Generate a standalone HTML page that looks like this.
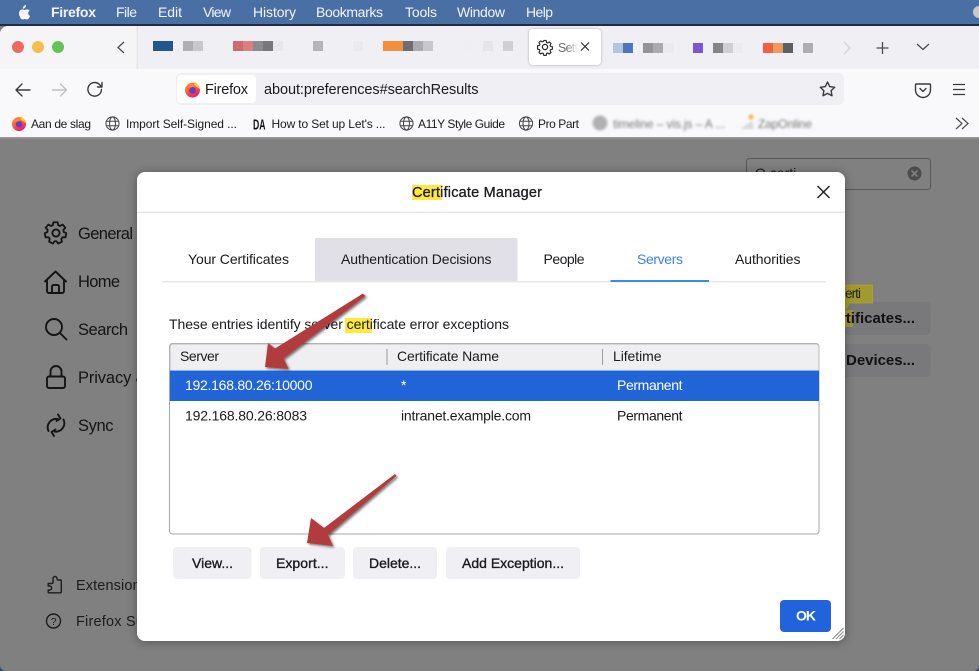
<!DOCTYPE html>
<html><head><meta charset="utf-8"><title>Certificate Manager</title>
<style>
html,body{margin:0;padding:0;width:979px;height:671px;overflow:hidden;background:#808080}
svg{display:block;font-family:"Liberation Sans",sans-serif}
text{white-space:pre}
.m{fill:#f2f5fa;font-size:14px}
.b{fill:#1b1b1f;font-size:12px}
.s{fill:#141416;font-size:16.500px}
.s2{fill:#1c1c1e;font-size:14.500px}
.d{fill:#1b1b1f;font-size:14px}
.bt{fill:#1b1b1f;font-size:14px;stroke:#1b1b1f;stroke-width:.35}
.ic{fill:none;stroke:#3a3a3e;stroke-width:1.4;stroke-linecap:round;stroke-linejoin:round}
.si{fill:none;stroke:#141416;stroke-width:1.9;stroke-linecap:round;stroke-linejoin:round}
</style></head><body>
<svg width="979" height="671" viewBox="0 0 979 671" xmlns="http://www.w3.org/2000/svg">
<defs>
<filter id="sh" x="-10%" y="-10%" width="120%" height="120%"><feDropShadow dx="0" dy="1" stdDeviation="5" flood-color="#000" flood-opacity=".35"/></filter>
<filter id="ash" x="-20%" y="-20%" width="140%" height="140%"><feDropShadow dx="1.5" dy="1.5" stdDeviation="1.2" flood-color="#000" flood-opacity=".55"/></filter>
<filter id="bl"><feGaussianBlur stdDeviation="1.3"/></filter>
<filter id="ts" x="-10%" y="-30%" width="120%" height="160%"><feDropShadow dx="0" dy="0" stdDeviation="1.2" flood-color="#000" flood-opacity=".3"/></filter>
<linearGradient id="ff" x1="0" y1="0" x2="0.6" y2="1"><stop offset="0" stop-color="#ff9a2e"/><stop offset=".5" stop-color="#ff5a3c"/><stop offset="1" stop-color="#e3226b"/></linearGradient>
<linearGradient id="fd" x1="0" y1="0" x2="1" y2="0"><stop offset="0" stop-color="#fff" stop-opacity="0"/><stop offset="1" stop-color="#fff"/></linearGradient>
<symbol id="fx" viewBox="0 0 16 16"><circle cx="8" cy="8.6" r="7" fill="url(#ff)"/><path d="M10 .5l2.500 2.500L15.500 8l-3-2-3-2z" fill="#ffc82e"/><circle cx="8" cy="8.8" r="3.200" fill="#6b3bc4"/><path d="M3 6c2-3 5-3 7-2l-3 2z" fill="#ff8a2e"/></symbol>
<symbol id="gl" viewBox="0 0 16 16"><g fill="none" stroke="#46464a" stroke-width="1.1"><circle cx="8" cy="8" r="7"/><ellipse cx="8" cy="8" rx="3.2" ry="7"/><path d="M1.4 5.6h13.2M1.4 10.4h13.2"/></g></symbol>
</defs>

<!-- menu bar -->
<rect width="979" height="26" fill="#4a6fa4"/>
<g transform="translate(4.800,1.200) scale(.85)"><path d="M23.9 7.5c.7-.9 1.100-1.900 1-3-1 .1-2 .6-2.700 1.400-.6.700-1.100 1.700-1 2.800 1.100 0 2-.5 2.700-1.200zM27.500 14.200c0-2 1.600-2.900 1.700-3-.9-1.400-2.400-1.600-2.900-1.600-1.200-.1-2.400.7-3 .7s-1.600-.7-2.600-.7c-1.300 0-2.600.8-3.300 2-1.400 2.400-.4 6 1 8 .7 1 1.500 2 2.500 2 1 0 1.400-.6 2.600-.6s1.600.6 2.600.6c1.100 0 1.800-1 2.500-2 .8-1.100 1.100-2.200 1.100-2.300 0 0-2.200-.8-2.200-3.100z" fill="#f4f6fa"/></g>
<text class="m" x="51" y="17" textLength="45" font-weight="700">Firefox</text>
<text class="m" x="116" y="17" textLength="21">File</text>
<text class="m" x="158" y="17" textLength="24">Edit</text>
<text class="m" x="203" y="17" textLength="28">View</text>
<text class="m" x="253" y="17" textLength="43">History</text>
<text class="m" x="316" y="17" textLength="67">Bookmarks</text>
<text class="m" x="405" y="17" textLength="32">Tools</text>
<text class="m" x="457" y="17" textLength="48">Window</text>
<text class="m" x="526" y="17" textLength="27">Help</text>
<circle cx="979" cy="12" r="6" fill="#c9c9c9"/>

<!-- window chrome -->
<rect x="0" y="24" width="979" height="2" fill="#1f2c44"/>
<path d="M0 34a8 8 0 0 1 8-8H979V70H0z" fill="#f0f0f4"/>
<path d="M0 34a8 8 0 0 1 8-8H137V69H0z" fill="#f5f4f6"/>
<rect x="136.500" y="26" width="1.500" height="43" fill="#e6e5e9"/>
<circle cx="18" cy="47" r="6" fill="#ee6a5f"/><circle cx="38" cy="47" r="6" fill="#f5bd4f"/><circle cx="58" cy="47" r="6" fill="#61c454"/>
<path d="M124 42l-6 5.500 6 5.500" fill="none" stroke="#4c4c50" stroke-width="1.300"/>

<!-- pixelated tabs -->
<g>
<rect x="153" y="41" width="20" height="10" fill="#23558f"/><rect x="183" y="41" width="10" height="10" fill="#b0b0b2"/><rect x="193" y="41" width="10" height="10" fill="#c8c8cc"/>
<rect x="233" y="41" width="10" height="10" fill="#d06a6d"/><rect x="243" y="41" width="10" height="10" fill="#d98080"/><rect x="253" y="41" width="10" height="10" fill="#8c8c90"/><rect x="263" y="41" width="10" height="10" fill="#78787c"/><rect x="273" y="41" width="10" height="10" fill="#e8e8ec"/>
<rect x="313" y="41" width="10" height="10" fill="#b4b4b6"/><rect x="353" y="41" width="10" height="10" fill="#ebebef"/>
<rect x="383" y="41" width="20" height="10" fill="#f28e3c"/><rect x="403" y="41" width="10" height="10" fill="#6e6e72"/><rect x="413" y="41" width="10" height="10" fill="#ababaf"/><rect x="423" y="41" width="10" height="10" fill="#c8c8cc"/>
<rect x="463" y="41" width="10" height="10" fill="#edeff1"/><rect x="483" y="41" width="10" height="10" fill="#e6e6ea"/><rect x="503" y="41" width="10" height="10" fill="#d0d0d4"/>
<rect x="613" y="43" width="10" height="10" fill="#b3c5e0"/><rect x="623" y="43" width="10" height="10" fill="#4a78c4"/><rect x="643" y="43" width="10" height="10" fill="#949496"/><rect x="653" y="43" width="10" height="10" fill="#ababad"/><rect x="663" y="43" width="10" height="10" fill="#eaeaee"/>
<rect x="693" y="43" width="10" height="10" fill="#7b55e0"/><rect x="713" y="43" width="10" height="10" fill="#858587"/><rect x="723" y="43" width="10" height="10" fill="#d0d0d4"/><rect x="733" y="43" width="10" height="10" fill="#ececf0"/>
<rect x="763" y="43" width="10" height="10" fill="#ee6040"/><rect x="773" y="43" width="10" height="10" fill="#f0985a"/><rect x="783" y="43" width="10" height="10" fill="#606062"/><rect x="803" y="43" width="10" height="10" fill="#aeaeb0"/>
</g>

<!-- selected tab -->
<rect x="529" y="29" width="72" height="36" rx="4" fill="#fff" filter="url(#ts)"/>
<g transform="translate(537,39)" fill="none" stroke="#2a2a2e" stroke-width="1.300" stroke-linejoin="round"><circle cx="8" cy="8" r="2.600"/><path d="M6.700 .8h2.600l.4 2.100 1.300.6 1.900-1.100 1.800 1.800-1.100 1.900.6 1.300 2.100.4v2.600l-2.100.4-.6 1.300 1.100 1.900-1.800 1.800-1.900-1.100-1.300.6-.4 2.100H6.700l-.4-2.100-1.300-.6-1.900 1.100-1.800-1.800 1.100-1.900-.6-1.300-2.100-.4V6.600l2.100-.4.6-1.300-1.100-1.900 1.800-1.800 1.900 1.100 1.300-.6z" transform="translate(.8 .8) scale(.9)"/></g>
<text x="558" y="52" font-size="12.500" fill="#6a6a6e" textLength="22">Setti</text>
<rect x="566" y="40" width="12" height="16" fill="url(#fd)"/>
<rect x="578" y="40" width="5" height="16" fill="#fff"/>
<path d="M581 42.500l8 8M589 42.500l-8 8" stroke="#2a2a2e" stroke-width="1.100"/>
<path d="M844 42l6 6-6 6" fill="none" stroke="#d4d4d8" stroke-width="1.300"/>
<path d="M882.500 42v12M876.500 48h12" stroke="#4c4c50" stroke-width="1.300"/>
<path d="M917 44l6 5.500 6-5.500" fill="none" stroke="#4c4c50" stroke-width="1.300"/>

<!-- toolbar -->
<rect x="0" y="69" width="979" height="68" fill="#f9f9fb"/>
<path class="ic" d="M30 90H16.500M22 84l-6 6 6 6"/>
<path class="ic" d="M52.500 90H66M60.500 84l6 6-6 6" style="stroke:#c0c0c4"/>
<path class="ic" d="M101.500 89.500a6.800 6.800 0 1 1-2-5l2.200 2.200M102 82.500v4.500h-4.500"/>
<rect x="176" y="73" width="668" height="32" rx="5" fill="#f0f0f4"/>
<rect x="177" y="75" width="79" height="28" rx="4" fill="#fff"/>
<use href="#fx" x="184" y="81" width="17" height="17"/>
<text x="205" y="94" font-size="14.500" fill="#1b1b1f" textLength="43">Firefox</text>
<text x="264" y="94" font-size="14.500" fill="#1b1b1f" textLength="214.500">about:preferences#searchResults</text>
<path class="ic" d="M827.500 82l2.200 4.600 5 .7-3.600 3.500.9 5-4.500-2.400-4.500 2.400.9-5-3.600-3.500 5-.7z"/>
<path class="ic" d="M916.500 84h13a1 1 0 0 1 1 1v5a7.500 7.500 0 0 1-15 0v-5a1 1 0 0 1 1-1zM920 88.500l3 3 3-3"/>
<path d="M953 84.500h12M953 89.500h12M953 94.500h12" stroke="#3a3a3e" stroke-width="1.300"/>

<!-- bookmarks -->
<use href="#fx" x="11" y="115" width="16" height="17"/>
<text class="b" x="31" y="128" textLength="60">Aan de slag</text>
<use href="#gl" x="105" y="116" width="15" height="15"/>
<text class="b" x="126" y="128" textLength="111">Import Self-Signed ...</text>
<text x="253" y="129.500" font-size="15" font-weight="700" fill="#111" textLength="12.500" lengthAdjust="spacingAndGlyphs">DA</text>
<text class="b" x="271.500" y="128" textLength="114">How to Set up Let's ...</text>
<use href="#gl" x="399" y="116" width="15" height="15"/>
<text class="b" x="418" y="128" textLength="87">A11Y Style Guide</text>
<use href="#gl" x="518.500" y="116" width="15" height="15"/>
<text class="b" x="538" y="128" textLength="41">Pro Part</text>
<g filter="url(#bl)"><circle cx="600" cy="123" r="7.500" fill="#b0b0b4"/><text class="b" x="613" y="128" textLength="112" style="fill:#777">timeline – vis.js – A ...</text><path d="M740 129l12-8 2 8z" fill="#d8d8d8"/><circle cx="751" cy="117" r="2.500" fill="#f0b050"/><text class="b" x="758" y="128" textLength="54" style="fill:#777">ZapOnline</text></g>
<path d="M956 118l6 5.500-6 5.500M962 118l6 5.500-6 5.500" fill="none" stroke="#4c4c50" stroke-width="1.200"/>
<rect x="0" y="137" width="979" height="1.500" fill="#9a9a9c"/>

<!-- dim page behind -->
<rect x="0" y="138.500" width="979" height="533" fill="#808080"/>
<rect x="746.500" y="158.500" width="184" height="31" rx="3" fill="none" stroke="#58585a" stroke-width="1"/>
<text x="755" y="178" font-size="14" fill="#1c1c1e">Q certi</text>
<circle cx="914.500" cy="173.500" r="7" fill="#4c4c4e"/><path d="M911.500 170.500l6 6M917.500 170.500l-6 6" stroke="#808080" stroke-width="1.600"/>
<rect x="800" y="302" width="130.500" height="33" rx="4" fill="#79797c"/>
<rect x="800" y="344" width="130.500" height="33" rx="4" fill="#79797c"/>
<rect x="830" y="285" width="42.500" height="18" fill="#a39a2e" stroke="#b0a42e" stroke-width=".7"/>
<path d="M845 303l5 0-3 6-2 0z" fill="#a39a2e"/>
<text x="845" y="298" font-size="13.500" fill="#222" textLength="16">erti</text>
<rect x="830" y="310" width="23" height="17" fill="#a39a2e"/>
<text x="915" y="323" font-size="15" font-weight="700" fill="#111" text-anchor="end">Certificates...</text>
<text x="846" y="365" font-size="15" font-weight="700" fill="#111" textLength="69">Devices...</text>

<!-- sidebar -->
<g transform="translate(44,221)"><circle cx="12" cy="12" r="3.600" class="si"/><path class="si" d="M9.800 1.500h4.400l.6 3 1.900.9 2.700-1.500 2.800 3.300-2 2.200.3 2.200 2.700 1.300-.8 4.300-3-.1-1.400 1.700.7 3-3.900 1.900-1.800-2.400h-2l-1.800 2.400-3.900-1.900.7-3-1.400-1.700-3 .1-.8-4.300 2.700-1.300.3-2.200-2-2.200 2.800-3.300 2.700 1.500 1.900-.9z" transform="scale(.96) translate(0,-.2)"/></g>
<path class="si" d="M45 281.500l10.500-10 10.500 10M47 279.500v11.500a2 2 0 0 0 2 2h13a2 2 0 0 0 2-2v-11.500M52 293v-6.500a1.500 1.500 0 0 1 1.500-1.500h4a1.500 1.500 0 0 1 1.500 1.500V293"/>
<circle class="si" cx="54" cy="327" r="8"/><path class="si" d="M60 333l6.500 6.500"/>
<rect class="si" x="47" y="376.500" width="18" height="11.500" rx="2"/><path class="si" d="M50.500 376v-4.500a5.500 5.500 0 0 1 11 0v4.500"/>
<path class="si" d="M48.500 431a8.500 8.500 0 0 1 9-12M63.500 419.500a8.500 8.500 0 0 1-9 12M58 414.500l2.500 4-4 2.500M54 436l-2.500-4 4-2.500"/>
<text class="s" x="78" y="239" textLength="55">General</text>
<text class="s" x="78" y="287" textLength="42">Home</text>
<text class="s" x="78" y="335" textLength="50">Search</text>
<text class="s" x="78" y="383" textLength="84">Privacy &amp; S</text>
<text class="s" x="78" y="431" textLength="35.500">Sync</text>
<path class="ic" style="stroke:#1c1c1e" d="M53 578.500a2 2 0 0 1 4 0c0 1 .2 1.500 1 1.500h2.500a.8.800 0 0 1 .8.800V592a.8.800 0 0 1-.8.800H49a.8.800 0 0 1-.8-.8v-2h1.500a2 2 0 0 0 0-4h-1.500v-2.500h4c.8 0 1-1 .8-3z"/>
<circle class="ic" style="stroke:#1c1c1e" cx="53.500" cy="621" r="7"/>
<text x="50.700" y="625" font-size="10.500" fill="#1c1c1e">?</text>
<text class="s2" x="76" y="590" textLength="72">Extensions</text>
<text class="s2" x="76" y="626" textLength="102">Firefox Support</text>

<!-- dialog -->
<rect x="137" y="172" width="708" height="469" rx="8" fill="#fff" filter="url(#sh)"/>
<rect x="137" y="211.500" width="708" height="1.500" fill="#e8e8ea"/>
<rect x="412" y="185" width="30" height="15" fill="#ffe93d"/>
<text x="412" y="197" font-size="14.500" fill="#1b1b1f" stroke="#1b1b1f" stroke-width=".3" textLength="130">Certificate Manager</text>
<path d="M817.500 186l12 12M829.500 186l-12 12" stroke="#1b1b1f" stroke-width="1.400"/>

<!-- tabs -->
<rect x="162" y="281" width="664" height="1.500" fill="#e8e8ea"/>
<rect x="315" y="238" width="202.500" height="43" fill="#e0e0e6"/>
<rect x="610.500" y="280" width="98.500" height="2" fill="#3f8af0"/>
<text class="d" x="188" y="264" textLength="101">Your Certificates</text>
<text class="d" x="341" y="264" textLength="150.500">Authentication Decisions</text>
<text class="d" x="543.500" y="264" textLength="41">People</text>
<text class="d" x="637" y="264" textLength="46" style="fill:#3b82f0">Servers</text>
<text class="d" x="735" y="264" textLength="65.500">Authorities</text>

<!-- description -->
<rect x="345" y="318" width="27" height="15" fill="#ffe93d"/>
<text class="d" x="169" y="329" textLength="340">These entries identify server certificate error exceptions</text>

<!-- tree -->
<rect x="169.500" y="343.500" width="649.500" height="190.500" rx="3" fill="#fff" stroke="#a8a8aa" stroke-width="1"/>
<path d="M170 370v-23.500a2.500 2.500 0 0 1 2.500-2.500h644a2.500 2.500 0 0 1 2.500 2.500V370z" fill="#efeff2"/>
<path d="M170 371v-24a3 3 0 0 1 3-3h643a3 3 0 0 1 3 3v24" fill="none" stroke="#bdbdbf" stroke-width="1"/>
<rect x="170" y="370.500" width="649" height="30.500" fill="#2164d8"/>
<rect x="386.500" y="349" width="1" height="16" fill="#9c9c9e"/>
<rect x="602" y="349" width="1" height="16" fill="#9c9c9e"/>
<text class="d" x="180" y="361" textLength="39">Server</text>
<text class="d" x="397" y="361" textLength="102">Certificate Name</text>
<text class="d" x="613" y="361" textLength="48.500">Lifetime</text>
<text class="d" style="fill:#fff" x="185" y="390" textLength="127.500">192.168.80.26:10000</text>
<text class="d" style="fill:#fff" x="401" y="390" textLength="6">*</text>
<text class="d" style="fill:#fff" x="617" y="390" textLength="65.500">Permanent</text>
<text class="d" x="185" y="420.500" textLength="122">192.168.80.26:8083</text>
<text class="d" x="401" y="420.500" textLength="130">intranet.example.com</text>
<text class="d" x="617" y="420.500" textLength="65.500">Permanent</text>

<!-- buttons -->
<rect x="173" y="547" width="78.500" height="32" rx="4" fill="#f0f0f4"/>
<rect x="260" y="547" width="85" height="32" rx="4" fill="#f0f0f4"/>
<rect x="353" y="547" width="84" height="32" rx="4" fill="#f0f0f4"/>
<rect x="446" y="547" width="134" height="32" rx="4" fill="#f0f0f4"/>
<text class="bt" x="192" y="568" textLength="41">View...</text>
<text class="bt" x="276" y="568" textLength="52.500">Export...</text>
<text class="bt" x="369" y="568" textLength="52">Delete...</text>
<text class="bt" x="462" y="568" textLength="102">Add Exception...</text>
<rect x="780" y="600" width="51" height="32" rx="4" fill="#2163dc"/>
<text x="796" y="620.500" font-size="14" font-weight="700" fill="#fff" textLength="20">OK</text>
<path d="M832.500 639l11-11M836 639l7.500-7.500M839.500 639l4-4" stroke="#8a8a8c" stroke-width="1"/>

<!-- arrows -->
<path filter="url(#ash)" d="M363 293.500l2.500 2.500-82 62.500 5 10.500-23.500-2 3-24 7 5.500z" fill="#b23a3c"/>
<path filter="url(#ash)" d="M395 474l1.500 2-68.500 59 5 11-26-3 4-25 13 10z" fill="#b23a3c"/>

<!-- bottom corners -->
<path d="M0 671v-6a6 6 0 0 0 6 6zM979 671v-6a6 6 0 0 1-6 6z" fill="#3a4a66"/>
</svg>
</body></html>
